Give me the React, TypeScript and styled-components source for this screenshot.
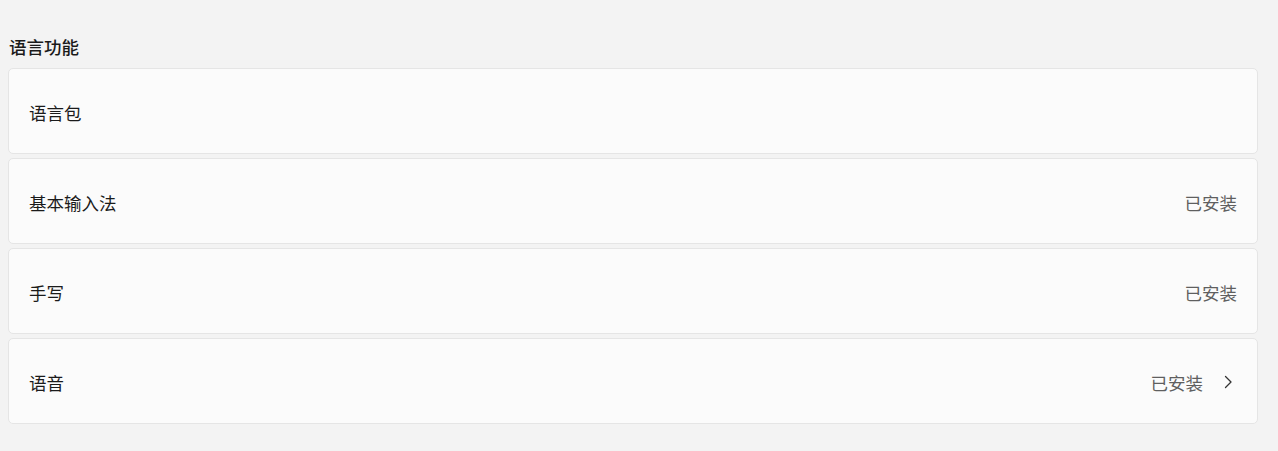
import styled, { createGlobalStyle } from 'styled-components';

const GlobalStyle = createGlobalStyle`
  html, body {
    margin: 0;
    padding: 0;
    background: #f3f3f3;
  }
  body {
    font-family: "Noto Sans CJK SC", "Noto Sans", sans-serif;
    color: #1b1b1b;
  }
`;

const Page = styled.div`
  padding: 35px 20px 0 8px;
  display: flex;
  flex-direction: column;
`;

const SectionTitle = styled.h2`
  margin: 0 0 9px 1px;
  font-size: 17.5px;
  line-height: 24px;
  font-weight: 500;
  color: #1a1a1a;
`;

const List = styled.div`
  display: flex;
  flex-direction: column;
  gap: 4px;
`;

const Card = styled.div`
  box-sizing: border-box;
  height: 86px;
  padding: 2px 20px 0 20px;
  display: flex;
  align-items: center;
  justify-content: space-between;
  background: #fbfbfb;
  border: 1px solid #e5e5e5;
  border-radius: 5px;
`;

const Label = styled.span`
  font-size: 17.5px;
  color: #1b1b1b;
`;

const Status = styled.div`
  display: flex;
  align-items: center;
  gap: 18px;
  font-size: 17.5px;
  color: #5f5f5f;
`;

const Chevron = () => (
  <svg width="14" height="14" viewBox="0 0 14 14" fill="none" style={{ marginRight: 2 }}>
    <path d="M4.5 1.5 L10 7 L4.5 12.5" stroke="#333" strokeWidth="1.3" strokeLinecap="round" strokeLinejoin="round" />
  </svg>
);

type Item = { label: string; status?: string; link?: boolean };

const items: Item[] = [
  { label: '语言包' },
  { label: '基本输入法', status: '已安装' },
  { label: '手写', status: '已安装' },
  { label: '语音', status: '已安装', link: true },
];

const App = () => {
  return (
    <>
      <GlobalStyle />
      <Page>
        <SectionTitle>语言功能</SectionTitle>
        <List>
          {items.map((item) => (
            <Card key={item.label}>
              <Label>{item.label}</Label>
              {item.status && (
                <Status>
                  {item.status}
                  {item.link && <Chevron />}
                </Status>
              )}
            </Card>
          ))}
        </List>
      </Page>
    </>
  );
};

export default App;
